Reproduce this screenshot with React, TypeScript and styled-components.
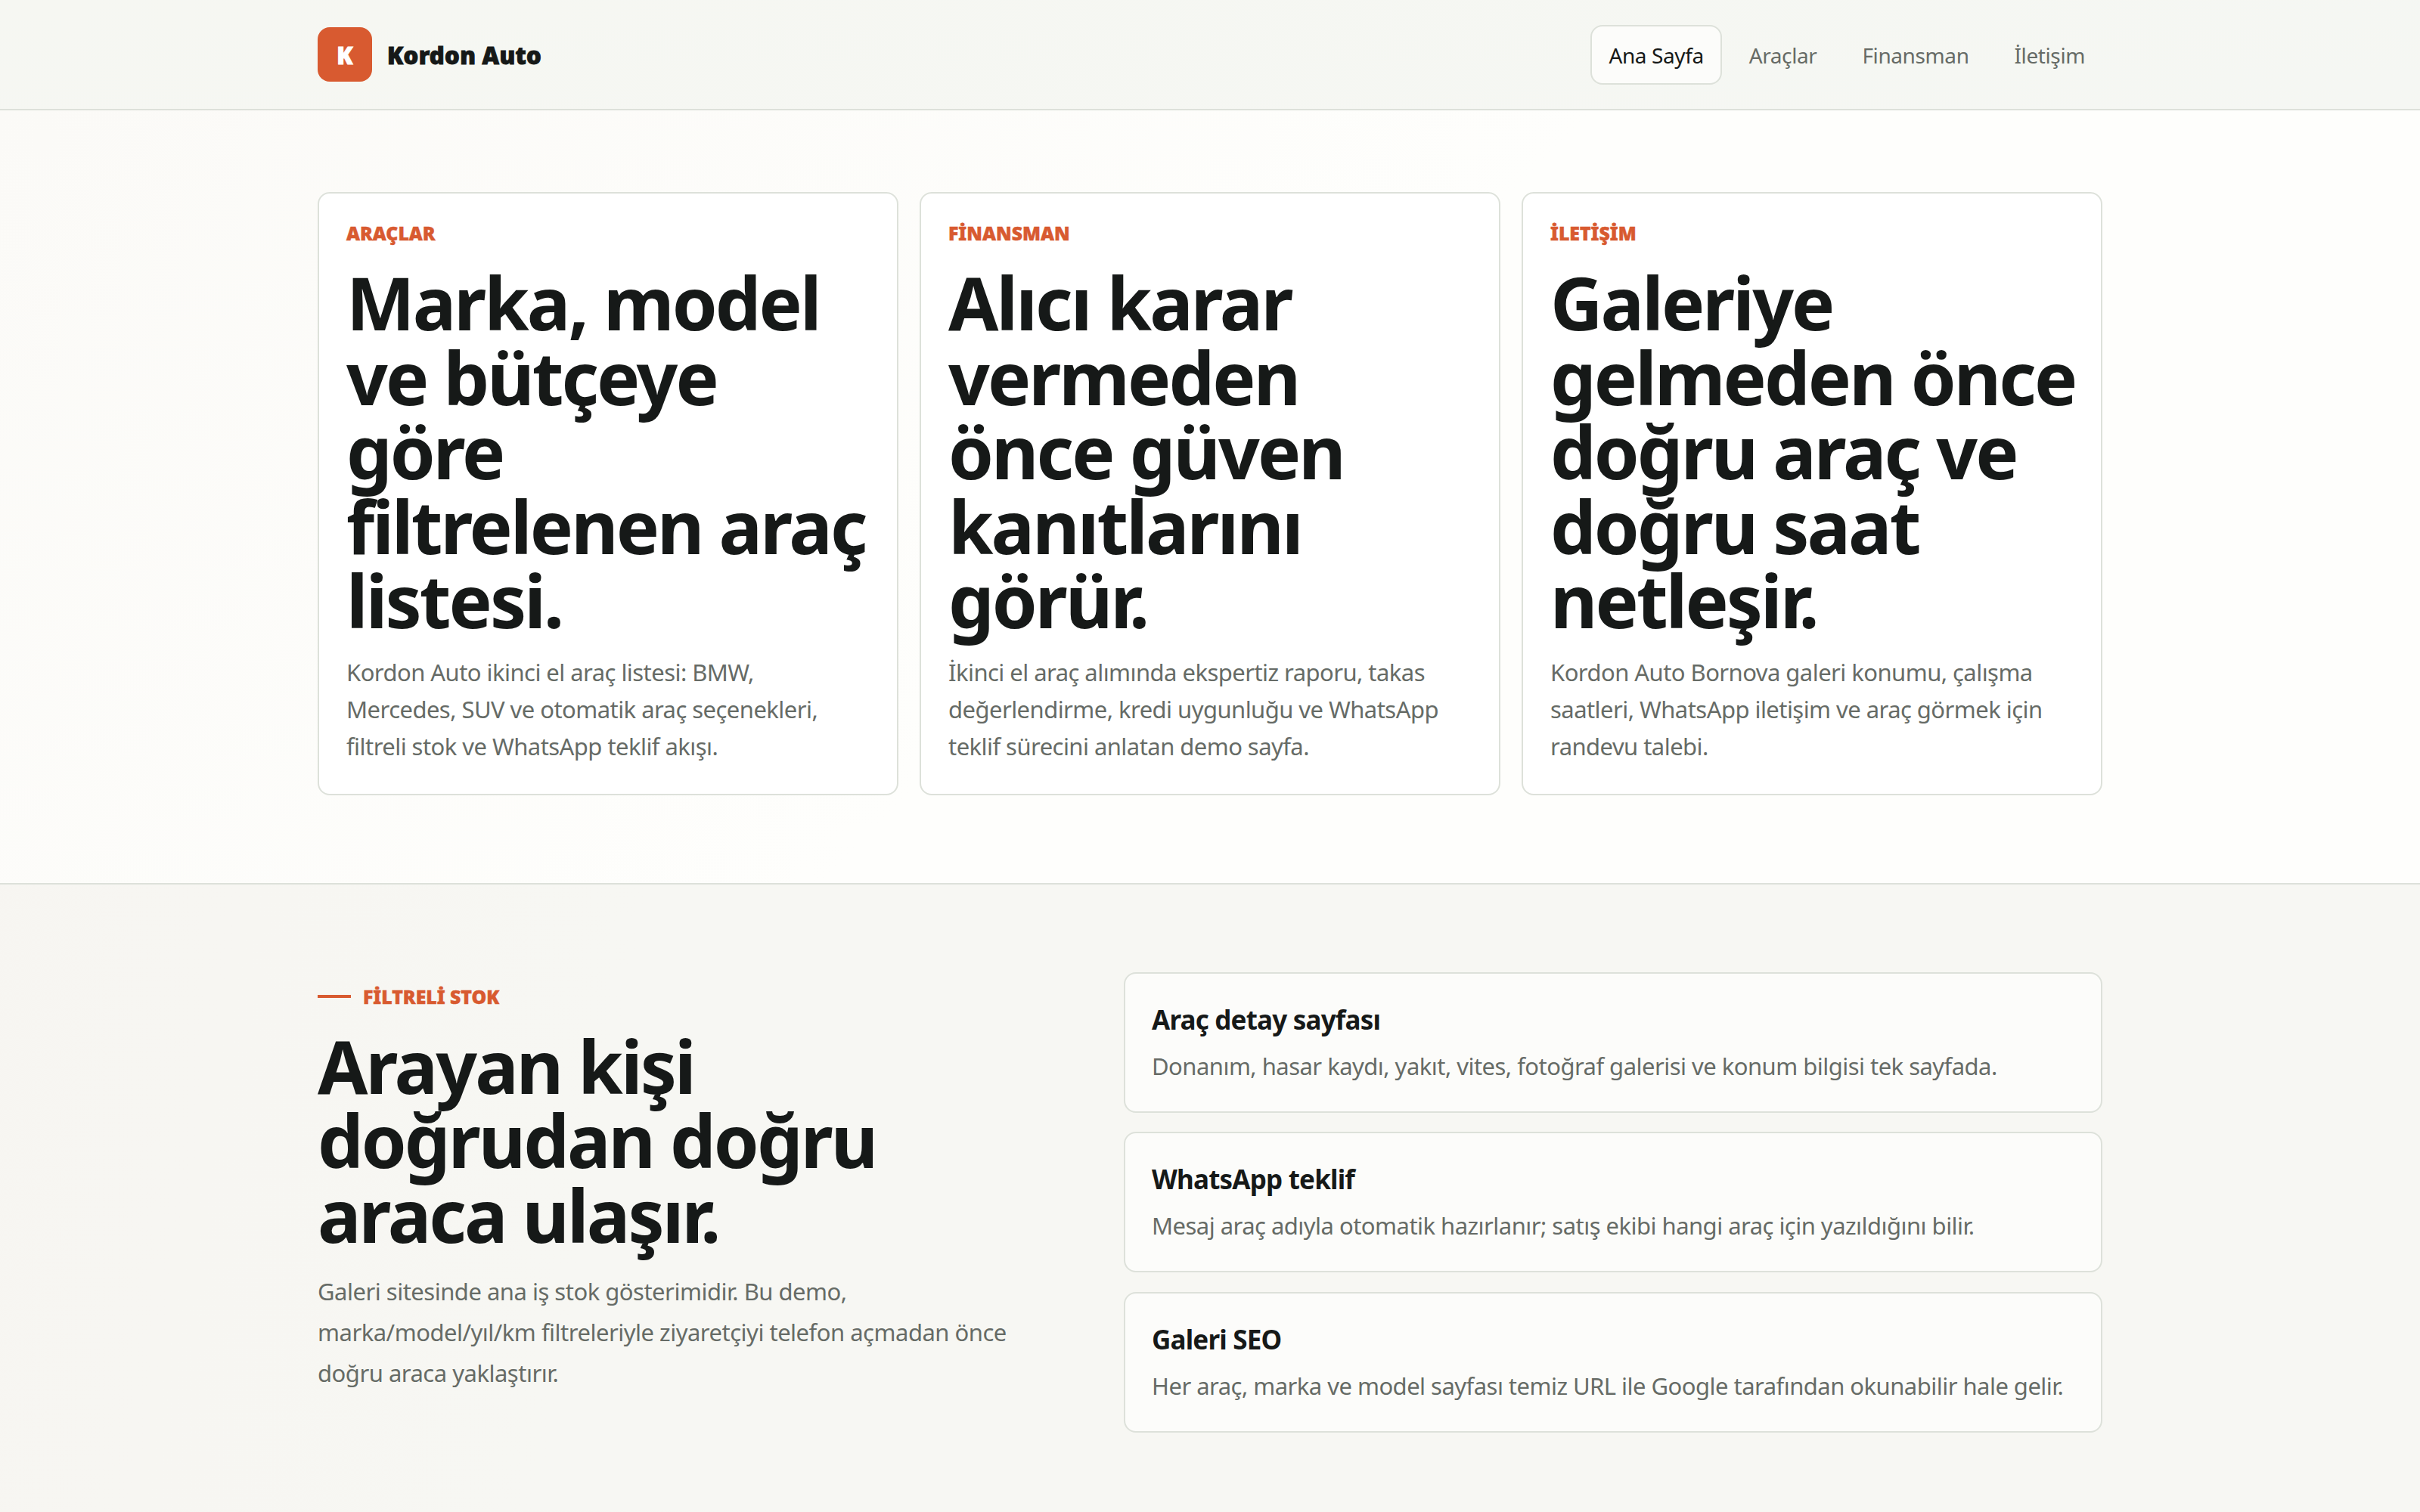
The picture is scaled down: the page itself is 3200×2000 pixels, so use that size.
import { createGlobalStyle, styled } from "styled-components";

const GlobalStyle = createGlobalStyle`
  * {
    box-sizing: border-box;
  }
  body {
    margin: 0;
    background: linear-gradient(100deg, #f7f5f1 0%, #f7f7f3 30%, #f7f7f3 100%);
    color: #161918;
    font-family: "Noto Sans", "Open Sans", sans-serif;
  }
`;

const Header = styled.header`
  height: 146px;
  background: linear-gradient(170deg, #f6f7f2 0%, #f5f7f3 100%);
  border-bottom: 2px solid #dde1da;
`;
const Container = styled.div`
  width: 2360px;
  margin: 0 auto;
`;
const HeaderInner = styled(Container)`
  height: 100%;
  display: flex;
  align-items: center;
  justify-content: space-between;
`;
const Brand = styled.div`
  display: flex;
  align-items: center;
  gap: 20px;
`;
const BrandName = styled.span`
  padding-top: 2px;
  font-size: 31px;
  font-weight: 900;
  -webkit-text-stroke: 1px #161918;
  letter-spacing: 0.3px;
`;
const BrandMark = styled.div`
  width: 72px;
  height: 72px;
  padding-top: 2px;
  border-radius: 16px;
  background: #d85a30;
  color: #fff;
  display: flex;
  align-items: center;
  justify-content: center;
  font-size: 31px;
  font-weight: 900;
  -webkit-text-stroke: 1px #fff;
`;
const Nav = styled.nav`
  display: flex;
  align-items: center;
  gap: 12px;
  margin-right: -1px;
`;
const NavLink = styled.a<{ $active?: boolean }>`
  padding: 19px 22px 17px;
  border: 2px solid ${(p) => (p.$active ? "#dde1da" : "transparent")};
  border-radius: 16px;
  background: ${(p) => (p.$active ? "#fcfcfa" : "transparent")};
  color: ${(p) => (p.$active ? "#161918" : "#666b66")};
  font-size: 28px;
  letter-spacing: -0.4px;
  line-height: 39px;
`;
const TopSection = styled.section`
  padding: 108px 0 116px;
  background: linear-gradient(135deg, #fbfaf7 0%, #fefefc 50%, #fefefc 100%);
  border-bottom: 2px solid #dde1da;
`;
const CardGrid = styled(Container)`
  display: grid;
  grid-template-columns: repeat(3, minmax(0, 1fr));
  gap: 28px;
`;
const Card = styled.article`
  padding: 34px 36px 38px;
  background: #fff;
  border: 2px solid #dde1da;
  border-radius: 16px;
`;
const Label = styled.div`
  margin-bottom: 25px;
  color: #d85a30;
  font-size: 24.8px;
  font-weight: 900;
  -webkit-text-stroke: 0.5px #d85a30;
  line-height: 36px;
`;
const Heading = styled.h2`
  font-size: 96px;
  font-weight: 700;
  letter-spacing: -2.9px;
  line-height: 98.5px;
`;
const CardTitle = styled(Heading)`
  margin: 0 0 21px;
`;
const Description = styled.p`
  margin: 0;
  max-width: 670px;
  color: #666b66;
  font-size: 31px;
  letter-spacing: -0.55px;
  line-height: 49px;
`;
const BottomSection = styled.section`
  padding: 116px 0 102px;
`;
const BottomGrid = styled(Container)`
  display: grid;
  grid-template-columns: 950px 1294px;
  justify-content: space-between;
`;
const LeftColumn = styled.div`
  padding-top: 14px;
`;
const Eyebrow = styled(Label)`
  display: flex;
  align-items: center;
  gap: 16px;
  &::before {
    content: "";
    width: 44px;
    height: 4px;
    background: #d85a30;
  }
`;
const SectionTitle = styled(Heading)`
  margin: 0 0 25px;
`;
const SectionText = styled.p`
  margin: 0;
  color: #666b66;
  font-size: 31px;
  letter-spacing: -0.5px;
  line-height: 54px;
`;
const FeatureList = styled.div`
  display: flex;
  flex-direction: column;
  gap: 25.6px;
`;
const Feature = styled.div`
  padding: 36px 36px 35px 35px;
  background: #fcfcfa;
  border: 2px solid #dde1da;
  border-radius: 16px;
`;
const FeatureTitle = styled.h3`
  margin: 0 0 12px;
  font-size: 35px;
  font-weight: 700;
  letter-spacing: -0.8px;
  line-height: 50px;
`;
const FeatureText = styled.p`
  margin: 0;
  color: #666b66;
  font-size: 31px;
  letter-spacing: -0.53px;
  line-height: 49px;
`;

const cards = [
  {
    label: "ARAÇLAR",
    title: "Marka, model ve bütçeye göre filtrelenen araç listesi.",
    text: "Kordon Auto ikinci el araç listesi: BMW, Mercedes, SUV ve otomatik araç seçenekleri, filtreli stok ve WhatsApp teklif akışı.",
  },
  {
    label: "FİNANSMAN",
    title: "Alıcı karar vermeden önce güven kanıtlarını görür.",
    text: "İkinci el araç alımında ekspertiz raporu, takas değerlendirme, kredi uygunluğu ve WhatsApp teklif sürecini anlatan demo sayfa.",
  },
  {
    label: "İLETİŞİM",
    title: "Galeriye gelmeden\u00a0önce doğru araç ve doğru saat netleşir.",
    text: "Kordon Auto Bornova galeri konumu, çalışma saatleri, WhatsApp iletişim ve araç görmek için randevu talebi.",
  },
];

const features = [
  {
    title: "Araç detay sayfası",
    text: "Donanım, hasar kaydı, yakıt, vites, fotoğraf galerisi ve konum bilgisi tek sayfada.",
  },
  {
    title: "WhatsApp teklif",
    text: "Mesaj araç adıyla otomatik hazırlanır; satış ekibi hangi araç için yazıldığını bilir.",
  },
  {
    title: "Galeri SEO",
    text: "Her araç, marka ve model sayfası temiz URL ile Google tarafından okunabilir hale gelir.",
  },
];

export default function App() {
  return (
    <>
      <GlobalStyle />
      <Header>
        <HeaderInner>
          <Brand>
            <BrandMark>K</BrandMark>
            <BrandName>Kordon Auto</BrandName>
          </Brand>
          <Nav>
            <NavLink $active>Ana Sayfa</NavLink>
            <NavLink>Araçlar</NavLink>
            <NavLink>Finansman</NavLink>
            <NavLink>İletişim</NavLink>
          </Nav>
        </HeaderInner>
      </Header>
      <TopSection>
        <CardGrid>
          {cards.map((card) => (
            <Card key={card.label}>
              <Label>{card.label}</Label>
              <CardTitle>{card.title}</CardTitle>
              <Description>{card.text}</Description>
            </Card>
          ))}
        </CardGrid>
      </TopSection>
      <BottomSection>
        <BottomGrid>
          <LeftColumn>
            <Eyebrow>FİLTRELİ STOK</Eyebrow>
            <SectionTitle>Arayan kişi doğrudan doğru araca ulaşır.</SectionTitle>
            <SectionText>
              Galeri sitesinde ana iş stok gösterimidir. Bu demo, marka/model/yıl/km filtreleriyle
              ziyaretçiyi telefon açmadan önce doğru araca yaklaştırır.
            </SectionText>
          </LeftColumn>
          <FeatureList>
            {features.map((feature) => (
              <Feature key={feature.title}>
                <FeatureTitle>{feature.title}</FeatureTitle>
                <FeatureText>{feature.text}</FeatureText>
              </Feature>
            ))}
          </FeatureList>
        </BottomGrid>
      </BottomSection>
    </>
  );
}
